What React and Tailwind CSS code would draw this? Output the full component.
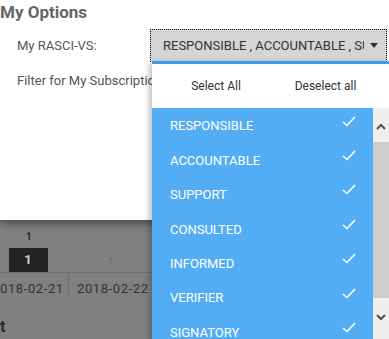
import React from 'react';

const roles = ['RESPONSIBLE', 'ACCOUNTABLE', 'SUPPORT', 'CONSULTED', 'INFORMED', 'VERIFIER', 'SIGNATORY'];

function Check() {
  return (
    <svg width="14" height="11" viewBox="0 0 14 11" className="shrink-0">
      <path d="M1 6 L5 9.5 L13 1" fill="none" stroke="white" strokeWidth="1.6" />
    </svg>
  );
}

function Chevron({ up }) {
  return (
    <svg width="10" height="7" viewBox="0 0 10 7">
      <path d={up ? 'M1 6 L5 2 L9 6' : 'M1 1 L5 5 L9 1'} fill="none" stroke="#505050" strokeWidth="2" />
    </svg>
  );
}

export default function App() {
  return (
    <div className="relative w-[389px] h-[339px] overflow-hidden bg-[#808080] font-['Roboto',sans-serif]">
      {/* dimmed page behind the dialog */}
      <div className="absolute left-0 top-[220px] w-full h-[119px] text-[#2a2a2a]">
        <div className="flex flex-col w-[56px] items-center pt-[10px]">
          <span className="text-[11px] font-bold leading-[14px] pl-[2px]">1</span>
          <div className="mt-[4px] w-[39px] h-[24px] bg-[#232323] text-[#cfcfcf] text-[13px] font-bold flex items-center justify-center">1</div>
        </div>
        <span className="absolute left-[108px] top-[32px] text-[#555] text-[11px]">↑</span>
        <div className="border-t border-[#687078] flex text-[13px] tracking-[0.6px] text-[#333]">
          <div className="w-[69px] border-r border-[#687078] pt-[6px] h-[22px] text-right pr-[6px] whitespace-nowrap overflow-hidden">018-02-21</div>
          <div className="pl-[8px] pt-[6px]">2018-02-22</div>
        </div>
        <div className="mt-[20px] text-[16px] font-bold text-[#2a2a2a] leading-none">t</div>
      </div>

      {/* dialog */}
      <div className="relative h-[220px] bg-white shadow-[0_2px_10px_rgba(0,0,0,0.55)]">
        <h2 className="text-[17px] font-bold text-[#666] leading-[24px]">My Options</h2>
        <div className="flex items-center mt-[5px] h-[33px]">
          <span className="pl-[17px] w-[150px] text-[13px] text-[#555]">My RASCI-VS:</span>
          <button className="w-[237px] h-[33px] bg-[#d5d5d5] border border-dotted border-black flex items-center pl-[12px] pr-[8px] text-[13px] text-[#333]">
            <span className="flex-1 text-left whitespace-nowrap overflow-hidden">RESPONSIBLE , ACCOUNTABLE , SUPPORT</span>
            <span className="ml-[6px] w-0 h-0 border-l-[4px] border-r-[4px] border-t-[5px] border-l-transparent border-r-transparent border-t-[#333]" />
          </button>
        </div>
        <div className="pl-[17px] mt-[9px] text-[13px] text-[#555] leading-[20px] whitespace-nowrap">Filter for My Subscriptions:</div>
      </div>

      {/* dropdown menu */}
      <div className="absolute left-[152px] top-[61px] w-[237px] h-[278px] bg-white border-t-[3px] border-[#3d9be9] shadow-[-3px_2px_6px_rgba(0,0,0,0.25)]">
        <div className="flex h-[44px] items-center text-[12px] text-[#333]">
          <span className="w-[128px] text-center">Select All</span>
          <span className="flex-1 text-center pr-[18px]">Deselect all</span>
        </div>
        <div className="flex">
          <ul className="w-[221px] bg-[#52adf5]">
            {roles.map((r) => (
              <li key={r} className="h-[34.4px] flex items-center pl-[18px] pr-[17px] text-white text-[13px]">
                <span className="flex-1 pt-[2px]">{r}</span>
                <span className="-mt-[8px]"><Check /></span>
              </li>
            ))}
          </ul>
          <div className="w-[16px] bg-[#efefef] flex flex-col">
            <div className="h-[34px] flex items-center justify-center pt-[2px]"><Chevron up /></div>
            <div className="h-[156px] bg-[#cdcdcd]" />
            <div className="h-[34px] flex items-center justify-center pt-[4px]"><Chevron /></div>
          </div>
        </div>
      </div>
    </div>
  );
}
